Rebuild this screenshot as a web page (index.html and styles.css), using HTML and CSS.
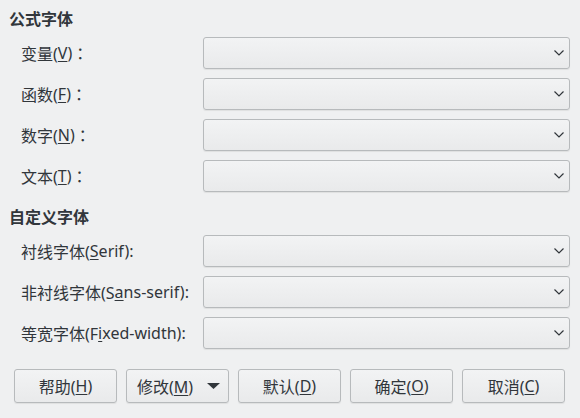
FILE: index.html
```html
<!DOCTYPE html>
<html lang="zh">
<head>
<meta charset="utf-8">
<link rel="stylesheet" href="styles.css">
</head>
<body>
<div class="dialog">
  <div class="section-title">公式字体</div>
  <div class="form">
    <div class="label">变量(<u>V</u>)<span class="colon">：</span></div>
    <div class="combo"><svg class="chev" width="10" height="6" viewBox="0 0 10 6"><path d="M0.5 0.5 L5 5 L9.5 0.5" fill="none" stroke="#31363b" stroke-width="1.2"/></svg></div>
    <div class="label">函数(<u>F</u>)<span class="colon">：</span></div>
    <div class="combo"><svg class="chev" width="10" height="6" viewBox="0 0 10 6"><path d="M0.5 0.5 L5 5 L9.5 0.5" fill="none" stroke="#31363b" stroke-width="1.2"/></svg></div>
    <div class="label">数字(<u>N</u>)<span class="colon">：</span></div>
    <div class="combo"><svg class="chev" width="10" height="6" viewBox="0 0 10 6"><path d="M0.5 0.5 L5 5 L9.5 0.5" fill="none" stroke="#31363b" stroke-width="1.2"/></svg></div>
    <div class="label">文本(<u>T</u>)<span class="colon">：</span></div>
    <div class="combo"><svg class="chev" width="10" height="6" viewBox="0 0 10 6"><path d="M0.5 0.5 L5 5 L9.5 0.5" fill="none" stroke="#31363b" stroke-width="1.2"/></svg></div>
  </div>
  <div class="section-title second">自定义字体</div>
  <div class="form">
    <div class="label">衬线字体(<u>S</u>erif):</div>
    <div class="combo"><svg class="chev" width="10" height="6" viewBox="0 0 10 6"><path d="M0.5 0.5 L5 5 L9.5 0.5" fill="none" stroke="#31363b" stroke-width="1.2"/></svg></div>
    <div class="label">非衬线字体(S<u>a</u>ns-serif):</div>
    <div class="combo"><svg class="chev" width="10" height="6" viewBox="0 0 10 6"><path d="M0.5 0.5 L5 5 L9.5 0.5" fill="none" stroke="#31363b" stroke-width="1.2"/></svg></div>
    <div class="label">等宽字体(F<u>i</u>xed-width):</div>
    <div class="combo"><svg class="chev" width="10" height="6" viewBox="0 0 10 6"><path d="M0.5 0.5 L5 5 L9.5 0.5" fill="none" stroke="#31363b" stroke-width="1.2"/></svg></div>
  </div>
  <div class="buttons">
    <div class="btn">帮助(<u>H</u>)</div>
    <div class="btn menu-btn"><span>修改(<u>M</u>)</span><svg width="13" height="6" viewBox="0 0 13 6"><polygon points="0,0 13,0 6.5,6" fill="#31363b"/></svg></div>
    <div class="btn">默认(<u>D</u>)</div>
    <div class="btn">确定(<u>O</u>)</div>
    <div class="btn">取消(<u>C</u>)</div>
  </div>
</div>
</body>
</html>
```
FILE: styles.css
```css
html, body {
  margin: 0;
  padding: 0;
  background: #eff0f1;
}
body {
  width: 580px;
  height: 418px;
  overflow: hidden;
  font-family: "Noto Sans", "Noto Sans CJK SC", sans-serif;
  font-size: 16px;
  color: #31363b;
}
.dialog {
  display: flex;
  flex-direction: column;
  padding: 9px 0 0 9px;
}
.section-title {
  font-weight: bold;
  height: 20px;
  line-height: 20px;
  margin-bottom: 8px;
}
.section-title.second {
  margin-top: 15px;
}
.form {
  display: grid;
  grid-template-columns: 182px 367px;
  grid-auto-rows: 32px;
  row-gap: 9px;
  margin-left: 12px;
}
.label {
  display: flex;
  align-items: center;
  white-space: nowrap;
}
.colon {
  font-family: "Noto Sans CJK JP", "Noto Sans CJK TC", sans-serif;
}
u {
  text-decoration-thickness: 1px;
  text-underline-offset: 2px;
}
.combo {
  box-sizing: border-box;
  display: flex;
  align-items: center;
  justify-content: flex-end;
  padding-right: 5px;
  border: 1px solid #b7babc;
  border-radius: 3px;
  background: linear-gradient(#f2f3f4, #e9eaeb);
  box-shadow: 0 1px 1px rgba(0,0,0,0.07);
}
.chev {
  display: block;
}
.buttons {
  display: flex;
  gap: 9px;
  margin-top: 20px;
  margin-left: 5px;
}
.btn {
  box-sizing: border-box;
  width: 103px;
  height: 34px;
  display: flex;
  align-items: center;
  justify-content: center;
  border: 1px solid #b7babc;
  border-radius: 3px;
  background: linear-gradient(#f2f3f4, #e9eaeb);
  box-shadow: 0 1px 1px rgba(0,0,0,0.07);
  white-space: nowrap;
}
.menu-btn {
  justify-content: space-between;
  padding: 0 8px 0 10px;
}
.menu-btn svg {
  display: block;
}
```
